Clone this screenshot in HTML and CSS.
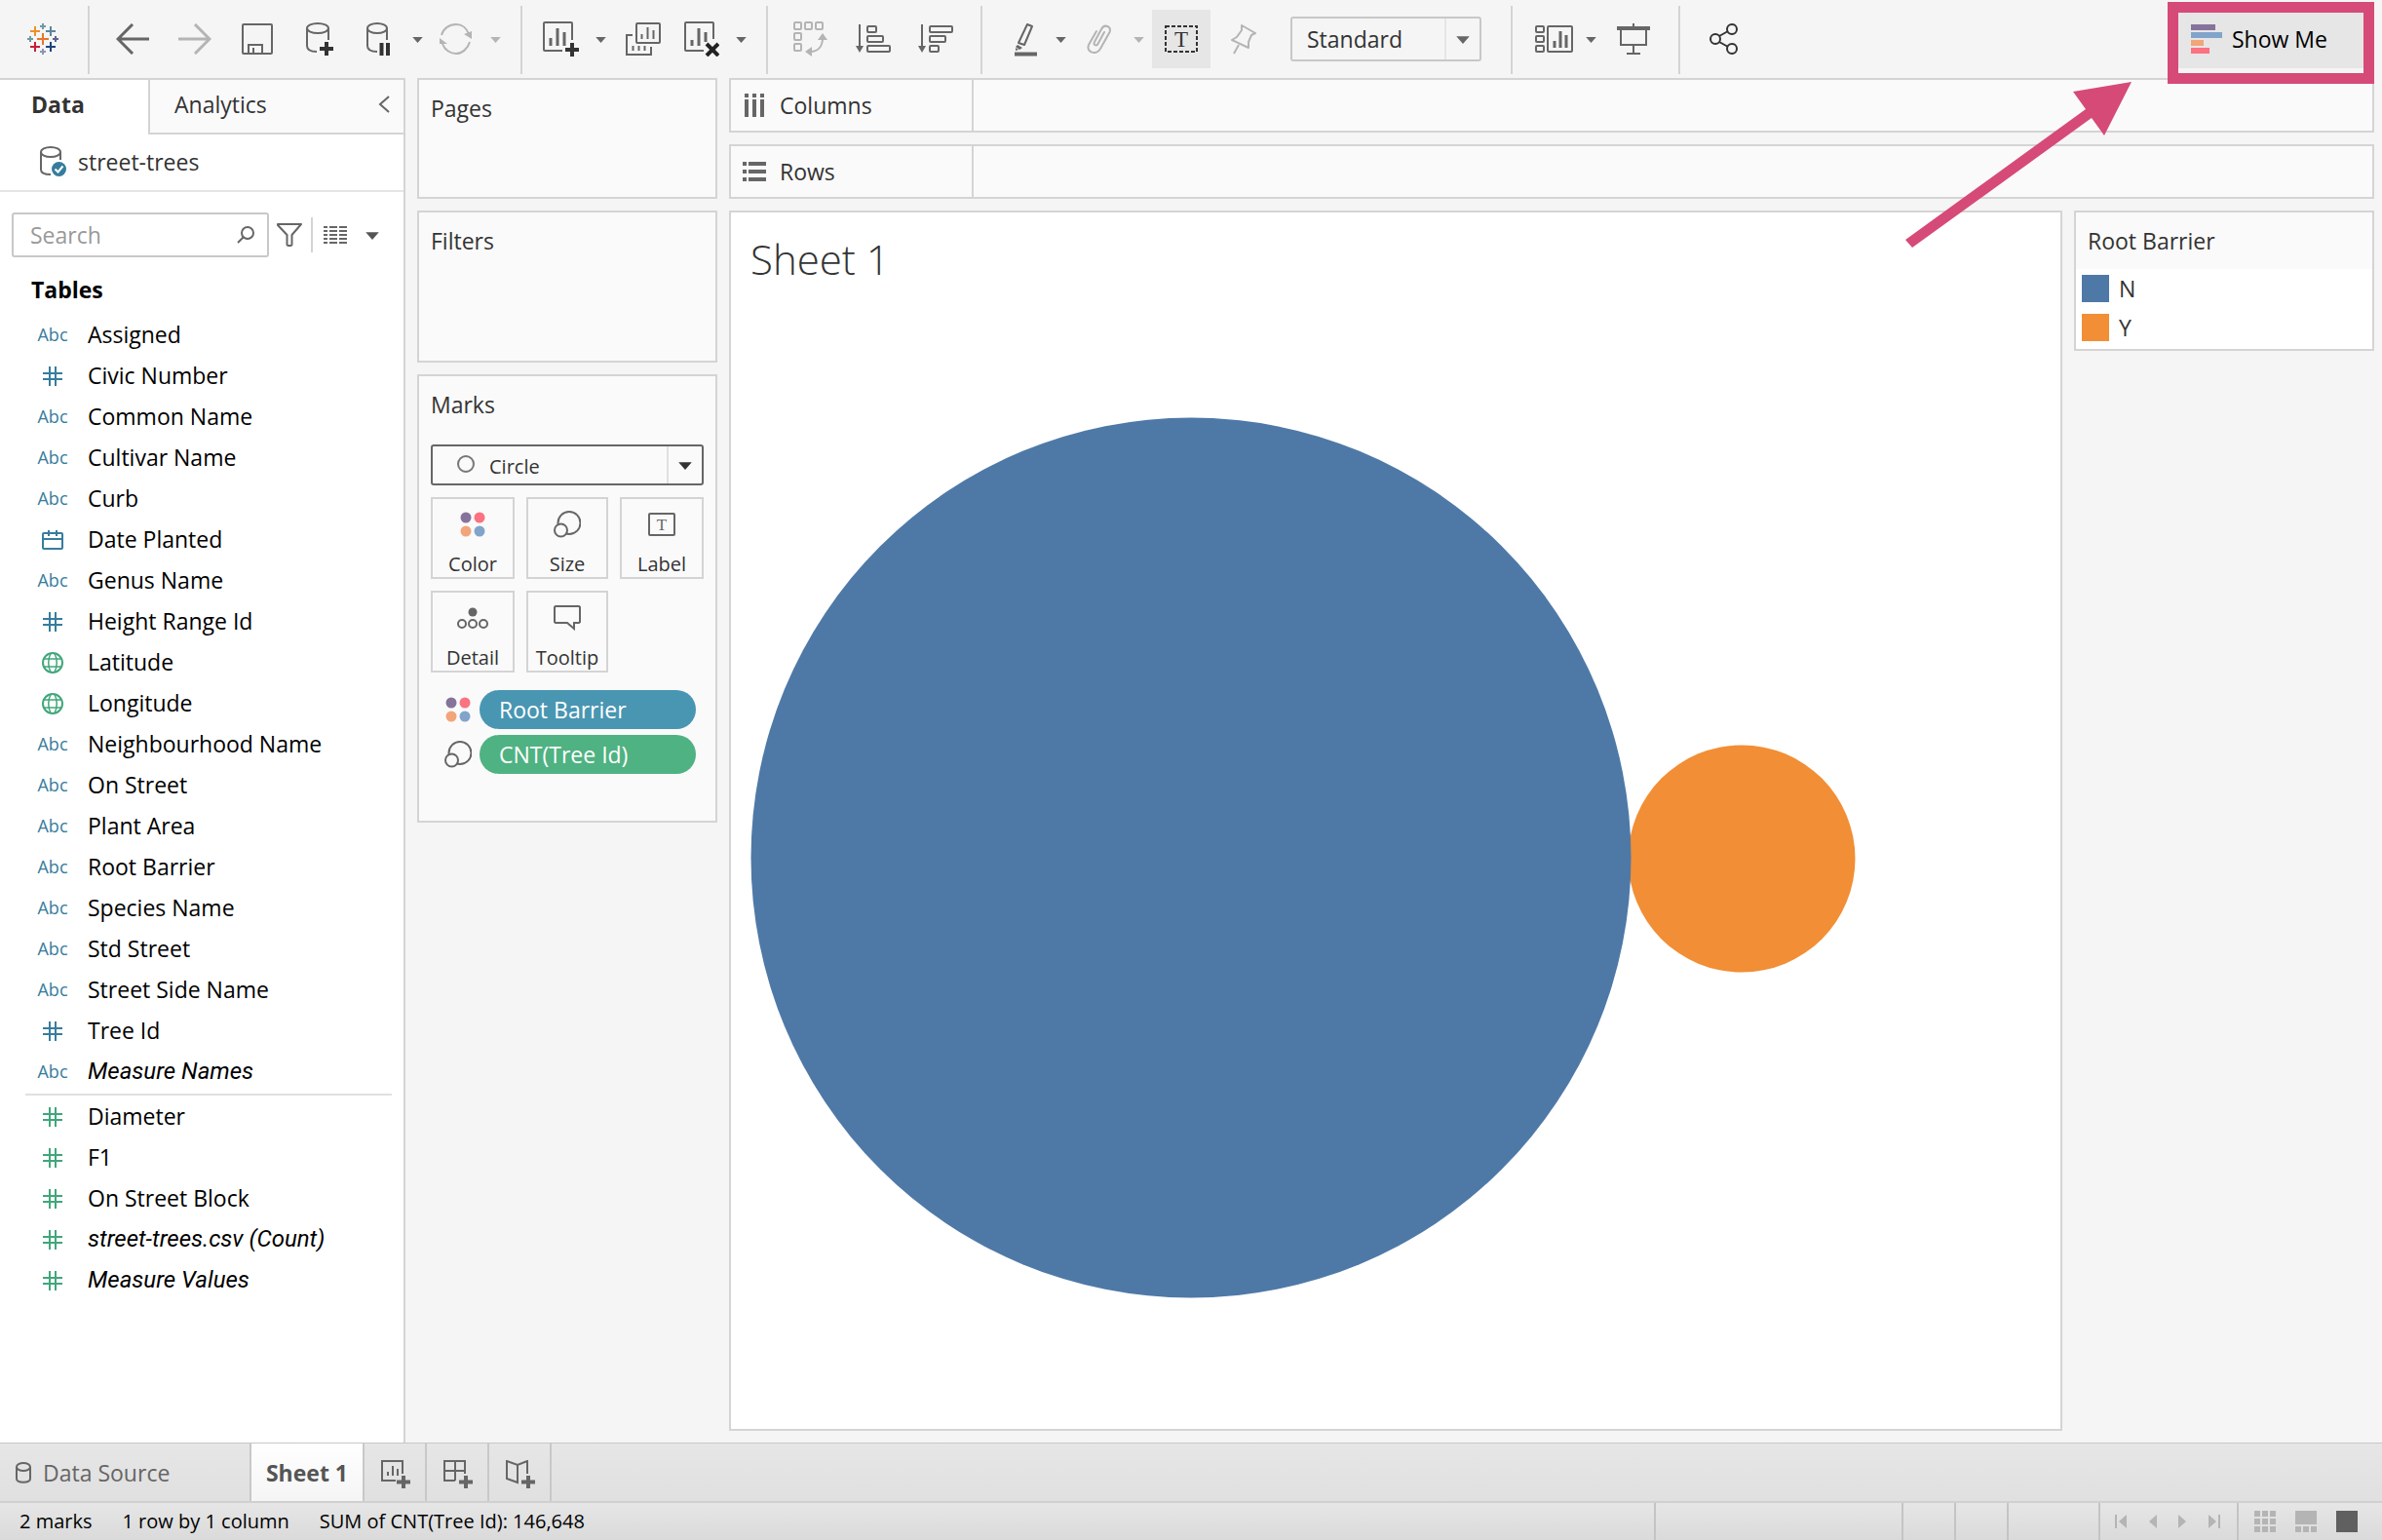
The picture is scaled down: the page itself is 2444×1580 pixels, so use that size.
FILE: index.html
```html
<!DOCTYPE html>
<html lang="en">
<head>
<meta charset="utf-8">
<title>Sheet 1 - street-trees</title>
<link rel="stylesheet" href="styles.css">
</head>
<body>
<svg class="sprite" aria-hidden="true">
  <symbol id="caret" viewBox="0 0 12 8"><path d="M0 1h12L6 8z" fill="currentColor"/></symbol>
  <symbol id="hash" viewBox="0 0 20 20"><path d="M7 0v20M13 0v20M0 7h20M0 13h20" fill="none" stroke="currentColor" stroke-width="2"/></symbol>
  <symbol id="globe" viewBox="0 0 22 22"><g fill="none" stroke="currentColor"><circle cx="11" cy="11" r="10" stroke-width="2"/><g stroke-width="1.5"><path d="M9 1.500C6 7 6 15 9 20.500M13 1.500c3 5.500 3 13.500 0 19M2 7h18M2 15h18"/></g></g></symbol>
  <symbol id="calendar" viewBox="0 0 22 20"><g fill="none" stroke="currentColor" stroke-width="2"><rect x="1" y="3" width="20" height="16" rx="1"/><path d="M1 9h20M7 0v6M15 0v6"/></g></symbol>
  <symbol id="dots" viewBox="0 0 26 26"><circle cx="6" cy="6" r="5.500" fill="#86739c"/><circle cx="20" cy="6" r="5.500" fill="#fb7280"/><circle cx="6" cy="20" r="5.500" fill="#f2a57b"/><circle cx="20" cy="20" r="5.500" fill="#82a4cb"/></symbol>
  <symbol id="size" viewBox="0 0 28 28"><g stroke="#666" stroke-width="2"><circle cx="16" cy="12.500" r="11.500" fill="none"/><circle cx="7.500" cy="20" r="6.500" fill="#fafafa"/></g></symbol>
</svg>

<header class="toolbar">
  <a class="logo" href="#" aria-label="Tableau home">
    <svg width="32" height="32" viewBox="0 0 32 32" fill="none">
      <path d="M16 10v12M10 16h12" stroke="#e8762c" stroke-width="2"/>
      <path d="M8 3v10M3 8h10" stroke="#eb912b" stroke-width="2"/>
      <path d="M24 3v10M19 8h10" stroke="#59879b" stroke-width="2"/>
      <path d="M8 19v10M3 24h10" stroke="#c72035" stroke-width="2"/>
      <path d="M24 19v10M19 24h10" stroke="#1f457e" stroke-width="2"/>
      <path d="M16 0v6M13 3h6M3 13v6M0 16h6" stroke="#7099a6" stroke-width="2"/>
      <path d="M29 13v6M26 16h6" stroke="#5b6591" stroke-width="2"/>
      <path d="M16 26v6M13 29h6" stroke="#8a94b8" stroke-width="2"/>
    </svg>
  </a>
  <span class="sep"></span>
  <button class="tool" aria-label="Undo"><svg width="34" height="32" viewBox="0 0 34 32"><path d="M17 1L2 16l15 15M2 16h32" fill="none" stroke="currentColor" stroke-width="3"/></svg></button>
  <button class="tool muted" aria-label="Redo"><svg width="34" height="32" viewBox="0 0 34 32"><path d="M17 1l15 15-15 15M32 16H0" fill="none" stroke="currentColor" stroke-width="3"/></svg></button>
  <button class="tool" aria-label="Save"><svg width="32" height="32" viewBox="0 0 32 32" fill="none" stroke="currentColor" stroke-width="2"><rect x="1" y="1" width="30" height="30" rx="1"/><path d="M7 31v-9h14v9M12 31v-6"/></svg></button>
  <button class="tool" aria-label="New data source"><svg width="28" height="34" viewBox="0 0 28 34" fill="none" stroke="currentColor" stroke-width="2"><ellipse cx="12" cy="6" rx="11" ry="5"/><path d="M1 6v18c0 4 4 6 10 6M23 6v12"/><path d="M21 20v14M14 27h14" stroke="#333" stroke-width="4"/></svg></button>
  <button class="tool split" aria-label="Pause auto updates"><svg width="24" height="34" viewBox="0 0 24 34" fill="none" stroke="currentColor" stroke-width="2"><ellipse cx="11" cy="6" rx="10" ry="5"/><path d="M1 6v18c0 4 4 6 10 6M21 6v12"/><path d="M15.500 21v13M22 21v13" stroke="#333" stroke-width="4"/></svg></button>
  <button class="drop" aria-label="Auto update options"><svg width="11" height="7"><use href="#caret"/></svg></button>
  <button class="tool split muted" aria-label="Refresh"><svg width="34" height="32" viewBox="0 0 34 32" fill="none" stroke="currentColor" stroke-width="2"><path d="M2 12C4 5 10 1 17 1c6 0 11 4 13 10M31 19c-2 7-8 12-14 12S5 27 3 21"/><path d="M25 11l8-3v8zM0 15l8 6H0z" fill="currentColor" stroke="none"/></svg></button>
  <button class="drop muted" aria-label="Refresh options"><svg width="11" height="7"><use href="#caret"/></svg></button>
  <span class="sep"></span>
  <button class="tool split" aria-label="New worksheet"><svg width="38" height="36" viewBox="0 0 38 36" fill="none" stroke="currentColor" stroke-width="2"><path d="M20 30H2a1 1 0 0 1-1-1V2a1 1 0 0 1 1-1h27a1 1 0 0 1 1 1v17"/><path d="M8 25v-8M15 25V7M22 25V11" stroke-width="3"/><path d="M30 22v14M23 29h14" stroke="#333" stroke-width="4"/></svg></button>
  <button class="drop" aria-label="New worksheet options"><svg width="11" height="7"><use href="#caret"/></svg></button>
  <button class="tool" aria-label="Duplicate"><svg width="36" height="34" viewBox="0 0 36 34" fill="none" stroke="currentColor" stroke-width="2"><rect x="11" y="1" width="24" height="20" rx="1"/><path d="M16.500 17v-5M22.500 17V5M28.500 17V8M7 13H1v20h25v-8M7.500 29v-5M13.500 29v-5M19.500 29v-5"/></svg></button>
  <button class="tool split" aria-label="Clear sheet"><svg width="36" height="36" viewBox="0 0 36 36" fill="none" stroke="currentColor" stroke-width="2"><path d="M20 30H2a1 1 0 0 1-1-1V2a1 1 0 0 1 1-1h27a1 1 0 0 1 1 1v16"/><path d="M8 25v-6M15 25V7M22 21V11" stroke-width="3"/><path d="M23 23l12 12M35 23L23 35" stroke="#222" stroke-width="4"/></svg></button>
  <button class="drop" aria-label="Clear options"><svg width="11" height="7"><use href="#caret"/></svg></button>
  <span class="sep"></span>
  <button class="tool muted" aria-label="Swap rows and columns"><svg width="36" height="36" viewBox="0 0 36 36" fill="none" stroke="currentColor" stroke-width="2"><rect x="1" y="1" width="7" height="7" rx="1"/><rect x="12" y="1" width="7" height="7" rx="1"/><rect x="23" y="1" width="7" height="7" rx="1"/><rect x="1" y="12" width="7" height="7" rx="1"/><rect x="1" y="23" width="7" height="7" rx="1"/><path d="M17 31c8 0 13-5 13-14"/><path d="M30 12l5 7H25zM12 31l7-5v10z" fill="currentColor" stroke="none"/></svg></button>
  <button class="tool" aria-label="Sort ascending"><svg width="36" height="30" viewBox="0 0 36 30" fill="none" stroke="currentColor" stroke-width="2"><path d="M4 0v25"/><path d="M0 22h8l-4 7z" fill="currentColor" stroke="none"/><rect x="12" y="2" width="9" height="6" rx="1"/><rect x="12" y="12" width="16" height="6" rx="1"/><rect x="12" y="22" width="23" height="6" rx="1"/></svg></button>
  <button class="tool" aria-label="Sort descending"><svg width="36" height="30" viewBox="0 0 36 30" fill="none" stroke="currentColor" stroke-width="2"><path d="M4 0v25"/><path d="M0 22h8l-4 7z" fill="currentColor" stroke="none"/><rect x="12" y="2" width="23" height="6" rx="1"/><rect x="12" y="12" width="16" height="6" rx="1"/><rect x="12" y="22" width="9" height="6" rx="1"/></svg></button>
  <span class="sep"></span>
  <button class="tool split" aria-label="Highlight"><svg width="32" height="36" viewBox="0 0 32 36" fill="none" stroke="currentColor" stroke-width="2"><path d="M22 3l5 2-8 19-6-2z" stroke-linejoin="round"/><path d="M12 24l5 3-3 2-4-3zM10 27v3l3-1z" fill="currentColor" stroke="none"/><path d="M9 33.500h23" stroke-width="4"/></svg></button>
  <button class="drop" aria-label="Highlight options"><svg width="11" height="7"><use href="#caret"/></svg></button>
  <button class="tool split muted" aria-label="Group members"><svg width="26" height="32" viewBox="0 0 26 32" fill="none" stroke="currentColor" stroke-width="2" stroke-linecap="round"><path d="M18 9l-6.500 12c-1.500 3-5 1-3.500-2L15 6c3-6 11-3 8.500 3L14 26c-4 7-15 4-12-4l8-14"/></svg></button>
  <button class="drop muted" aria-label="Group options"><svg width="11" height="7"><use href="#caret"/></svg></button>
  <button class="tool on" aria-label="Show mark labels" aria-pressed="true"><svg width="34" height="28" viewBox="0 0 34 28"><rect x="1" y="1" width="32" height="26" fill="none" stroke="#333" stroke-width="2" stroke-dasharray="4 2"/><text x="17" y="22" class="serif-t" font-size="23" text-anchor="middle">T</text></svg></button>
  <button class="tool muted" aria-label="Pin"><svg width="28" height="32" viewBox="0 0 28 32" fill="none" stroke="currentColor" stroke-width="2" stroke-linejoin="round"><path d="M12 2l14 8-4 2-3 7v6L2 17l5-3 5-7zM9 22L4 31"/></svg></button>
  <div class="fit">
    <select aria-label="Fit"><option>Standard</option></select>
    <svg width="14" height="9"><use href="#caret"/></svg>
  </div>
  <span class="sep wide"></span>
  <button class="tool split" aria-label="Show or hide cards"><svg width="44" height="28" viewBox="-5 0 44 28" fill="none" stroke="currentColor" stroke-width="2"><rect x="1" y="1" width="8" height="6" rx="1"/><rect x="1" y="11" width="8" height="6" rx="1"/><rect x="1" y="21" width="8" height="6" rx="1"/><rect x="13" y="1" width="25" height="26" rx="1"/><path d="M20 23v-7M26 23V6M32 23V10" stroke-width="3"/></svg></button>
  <button class="drop" aria-label="Card options"><svg width="11" height="7"><use href="#caret"/></svg></button>
  <button class="tool" aria-label="Presentation mode"><svg width="34" height="32" viewBox="0 0 34 32" fill="none" stroke="currentColor" stroke-width="2"><path d="M0 5h34" stroke-width="4"/><path d="M17 0v4M4 7v15h26V7M17 22v9M10 31h14"/></svg></button>
  <span class="sep"></span>
  <button class="tool dark" aria-label="Share"><svg width="30" height="32" viewBox="0 0 30 32" fill="none" stroke="currentColor" stroke-width="2"><circle cx="7" cy="16" r="5"/><circle cx="24" cy="6" r="5"/><circle cx="24" cy="26" r="5"/><path d="M11 13l9-5M11 19l9 5"/></svg></button>
  <button class="show-me"><svg width="32" height="30" viewBox="0 0 32 30"><path d="M0 0h25v6H0z" fill="#86739c"/><path d="M0 8h32v6H0z" fill="#82a4cb"/><path d="M0 16h13v6H0z" fill="#f2a57b"/><path d="M0 24h19v6H0z" fill="#fb7280"/></svg>Show Me</button>
  <svg class="pointer" width="232" height="170" viewBox="0 0 232 170" aria-hidden="true"><path d="M232 0l-60 10 13 18L0 162l7 8L191 37l13 18z" fill="#d64a78"/></svg>
</header>

<div class="workspace">
  <aside class="data-pane">
    <div class="tabs">
      <button class="tab active">Data</button>
      <button class="tab">Analytics<svg width="12" height="18" viewBox="0 0 12 18"><path d="M11 1L2 9l9 8" fill="none" stroke="#666" stroke-width="2"/></svg></button>
    </div>
    <a class="source" href="#">
      <svg width="28" height="32" viewBox="0 0 28 32"><g fill="none" stroke="#666" stroke-width="2"><ellipse cx="12" cy="6" rx="10" ry="5"/><path d="M2 6v18c0 4 4 5 10 5M22 6v8"/></g><circle cx="20.500" cy="23.500" r="7.500" fill="#367d9d"/><path d="M16.500 23.500l3 3 5-6" fill="none" stroke="#fff" stroke-width="2"/></svg>
      street-trees
    </a>
    <div class="search-row">
      <label class="search"><input type="text" placeholder="Search" aria-label="Search">
        <svg width="18" height="18" viewBox="0 0 18 18" fill="none" stroke="#666" stroke-width="2"><circle cx="11" cy="7" r="6"/><path d="M7 11l-6 6"/></svg></label>
      <button class="mini" aria-label="Filter"><svg width="26" height="24" viewBox="0 0 26 24"><path d="M1 1h24l-9.500 11v10l-1 1h-3l-1-1V12L1 2z" fill="none" stroke="#666" stroke-width="2" stroke-linejoin="round"/></svg></button>
      <span class="mini-sep"></span>
      <button class="mini listing" aria-label="View"><svg width="24" height="18" viewBox="0 0 24 18"><path d="M0 1h24M0 5h24M0 9h24M0 13h24M0 17h24" stroke="#666" stroke-width="2"/><path d="M5 0v18M15 0v18" stroke="#fff" stroke-width="2"/></svg></button>
      <button class="mini menu" aria-label="View options"><svg width="14" height="9"><use href="#caret"/></svg></button>
    </div>
    <h2>Tables</h2>
    <ul class="fields">
      <li><span class="type">Abc</span>Assigned</li>
      <li><span class="type"><svg width="20" height="20"><use href="#hash"/></svg></span>Civic Number</li>
      <li><span class="type">Abc</span>Common Name</li>
      <li><span class="type">Abc</span>Cultivar Name</li>
      <li><span class="type">Abc</span>Curb</li>
      <li><span class="type"><svg width="22" height="20"><use href="#calendar"/></svg></span>Date Planted</li>
      <li><span class="type">Abc</span>Genus Name</li>
      <li><span class="type"><svg width="20" height="20"><use href="#hash"/></svg></span>Height Range Id</li>
      <li><span class="type measure"><svg width="22" height="22"><use href="#globe"/></svg></span>Latitude</li>
      <li><span class="type measure"><svg width="22" height="22"><use href="#globe"/></svg></span>Longitude</li>
      <li><span class="type">Abc</span>Neighbourhood Name</li>
      <li><span class="type">Abc</span>On Street</li>
      <li><span class="type">Abc</span>Plant Area</li>
      <li><span class="type">Abc</span>Root Barrier</li>
      <li><span class="type">Abc</span>Species Name</li>
      <li><span class="type">Abc</span>Std Street</li>
      <li><span class="type">Abc</span>Street Side Name</li>
      <li><span class="type"><svg width="20" height="20"><use href="#hash"/></svg></span>Tree Id</li>
      <li><span class="type">Abc</span><em>Measure Names</em></li>
    </ul>
    <ul class="fields measures">
      <li><span class="type measure"><svg width="20" height="20"><use href="#hash"/></svg></span>Diameter</li>
      <li><span class="type measure"><svg width="20" height="20"><use href="#hash"/></svg></span>F1</li>
      <li><span class="type measure"><svg width="20" height="20"><use href="#hash"/></svg></span>On Street Block</li>
      <li><span class="type measure"><svg width="20" height="20"><use href="#hash"/></svg></span><em>street-trees.csv (Count)</em></li>
      <li><span class="type measure"><svg width="20" height="20"><use href="#hash"/></svg></span><em>Measure Values</em></li>
    </ul>
  </aside>

  <div class="cards">
    <section class="card pages"><h3>Pages</h3></section>
    <section class="card filters"><h3>Filters</h3></section>
    <section class="card marks">
      <h3>Marks</h3>
      <div class="mark-type">
        <select aria-label="Mark type"><option>Circle</option></select>
        <svg class="shape" width="20" height="20" viewBox="0 0 20 20"><circle cx="10" cy="10" r="8" fill="none" stroke="#777" stroke-width="2"/></svg>
        <svg class="arrow" width="14" height="9"><use href="#caret"/></svg>
      </div>
      <div class="mark-buttons">
        <button><svg width="26" height="26"><use href="#dots"/></svg>Color</button>
        <button><svg width="28" height="28"><use href="#size"/></svg>Size</button>
        <button><svg width="28" height="24" viewBox="0 0 28 24"><rect x="1" y="1" width="26" height="22" rx="1" fill="none" stroke="#666" stroke-width="2"/><text x="14" y="18" class="serif-t soft" font-size="17" text-anchor="middle">T</text></svg>Label</button>
        <button><svg width="32" height="22" viewBox="0 0 32 22" fill="none" stroke="#666" stroke-width="2"><circle cx="16" cy="5" r="4.500" fill="#666" stroke="none"/><circle cx="5" cy="17" r="4"/><circle cx="16" cy="17" r="4"/><circle cx="27" cy="17" r="4"/></svg>Detail</button>
        <button><svg width="28" height="26" viewBox="0 0 28 26"><path d="M2 1h24l1 1v15l-1 1h-5v6l-7-6H2l-1-1V2z" fill="none" stroke="#666" stroke-width="2"/></svg>Tooltip</button>
      </div>
      <div class="pill-row"><svg width="26" height="26"><use href="#dots"/></svg><button class="pill dimension">Root Barrier</button></div>
      <div class="pill-row"><svg width="28" height="28"><use href="#size"/></svg><button class="pill measure-pill">CNT(Tree Id)</button></div>
    </section>
  </div>

  <main>
    <div class="shelf"><div class="shelf-name"><svg width="24" height="24" viewBox="0 0 24 24"><path d="M4 0v4M12 0v4M20 0v4M4 6v18M12 6v18M20 6v18" stroke="#666" stroke-width="4"/></svg>Columns</div></div>
    <div class="shelf"><div class="shelf-name"><svg width="24" height="20" viewBox="0 0 24 20"><path d="M0 2h4M0 10h4M0 18h4M6 2h18M6 10h18M6 18h18" stroke="#666" stroke-width="4"/></svg>Rows</div></div>
    <div class="view">
      <section class="sheet">
        <h1>Sheet 1</h1>
        <svg class="viz" viewBox="0 0 1364 1140" preserveAspectRatio="xMinYMin meet" role="img" aria-label="Tree count by root barrier"><circle cx="1037" cy="555" r="116.500" fill="#f28e35"/><circle cx="472" cy="554" r="451.500" fill="#4e79a7"/></svg>
      </section>
      <aside class="legend">
        <h3>Root Barrier</h3>
        <ul><li><span class="swatch no"></span>N</li><li><span class="swatch yes"></span>Y</li></ul>
      </aside>
    </div>
  </main>
</div>

<nav class="sheets">
  <button class="data-source"><svg width="16" height="22" viewBox="0 0 16 22" fill="none" stroke="currentColor" stroke-width="2"><ellipse cx="8" cy="5" rx="7" ry="4"/><path d="M1 5v12c0 5 14 5 14 0V5"/></svg>Data Source</button>
  <button class="current">Sheet 1</button>
  <button class="new" aria-label="New worksheet"><svg width="30" height="30" viewBox="0 0 30 30" fill="none" stroke="currentColor" stroke-width="2"><path d="M15 21H1V1h21v13M7 16v-4M12 16V6M17 16V9"/><path d="M23 16v13M16 22.500h14" stroke-width="4"/></svg></button>
  <button class="new" aria-label="New dashboard"><svg width="30" height="30" viewBox="0 0 30 30" fill="none" stroke="currentColor" stroke-width="2"><path d="M12 21H1V1h21v13M12 1v20M1 11h21"/><path d="M23 16v13M16 22.500h14" stroke-width="4"/></svg></button>
  <button class="new" aria-label="New story"><svg width="30" height="30" viewBox="0 0 30 30" fill="none" stroke="currentColor" stroke-width="2"><path d="M12 4v19L1 19V1l11 4 10-4v13"/><path d="M23 16v13M16 22.500h14" stroke-width="4"/></svg></button>
</nav>

<footer class="status">
  <span>2 marks</span><span>1 row by 1 column</span><span class="sum">SUM of CNT(Tree Id): 146,648</span>
  <i class="cell long"></i><i class="cell"></i><i class="cell"></i><i class="cell mid"></i>
  <div class="cell pager">
    <button aria-label="First"><svg width="12" height="14" viewBox="0 0 12 14"><path d="M0 0h2v14H0zM12 0v14L4 7z"/></svg></button>
    <button aria-label="Previous"><svg width="8" height="14" viewBox="0 0 8 14"><path d="M8 0v14L0 7z"/></svg></button>
    <button aria-label="Next"><svg width="8" height="14" viewBox="0 0 8 14"><path d="M0 0v14l8-7z"/></svg></button>
    <button aria-label="Last"><svg width="12" height="14" viewBox="0 0 12 14"><path d="M10 0h2v14h-2zM0 0v14l8-7z"/></svg></button>
  </div>
  <div class="cell views">
    <button aria-label="Sheet sorter"><svg width="22" height="22" viewBox="0 0 22 22"><path d="M0 0h6v6H0zM8 0h6v6H8zM16 0h6v6h-6zM0 8h6v6H0zM8 8h6v6H8zM16 8h6v6h-6zM0 16h6v6H0zM8 16h6v6H8zM16 16h6v6h-6z"/></svg></button>
    <button aria-label="Filmstrip"><svg width="22" height="22" viewBox="0 0 22 22"><path d="M0 0h22v14H0zM0 16h6v6H0zM8 16h6v6H8zM16 16h6v6h-6z"/></svg></button>
    <button class="chosen" aria-label="Tabs"><svg width="22" height="22" viewBox="0 0 22 22"><path d="M0 0h22v22H0z"/></svg></button>
  </div>
</footer>
</body>
</html>
```

FILE: styles.css
```css
* { box-sizing: border-box; }

body {
  margin: 0;
  min-height: 100vh;
  display: flex;
  flex-direction: column;
  background: #f5f5f5;
  color: #333;
  font: 23px/42px "Open Sans", "Noto Sans", sans-serif;
}

h1, h2, h3, ul { margin: 0; padding: 0; font-weight: 400; font-size: inherit; list-style: none; }
button, select, input { margin: 0; padding: 0; border: 0; background: none; color: inherit; font: inherit; }
a { color: inherit; text-decoration: none; }
svg { display: block; flex: none; }
.sprite { position: absolute; width: 0; height: 0; }
.serif-t { font-family: "Liberation Serif", serif; fill: #333; }
.soft { fill: #666; }

/* Toolbar */
.toolbar { position: relative; display: flex; align-items: center; height: 80px; color: #666; }
.logo { padding: 0 16px 0 28px; }
.sep { flex: none; width: 2px; height: 70px; margin: 2px 12px 0 14px; background: #d4d4d4; }
.sep.wide { margin-left: 30px; }
.tool, .drop { flex: none; display: flex; align-items: center; justify-content: center; width: 64px; height: 60px; }
.split { width: 56px; }
.drop { width: 24px; }
.muted { color: #b4b4b4; }
.dark { color: #333; }
.on { width: 60px; margin: 0 2px; background: #e6e6e6; }
.fit { position: relative; width: 196px; height: 46px; margin-left: 16px; border: 2px solid #c8c8c8; border-radius: 3px; }
.fit select { width: 100%; height: 42px; padding-left: 15px; appearance: none; color: #333; }
.fit svg { position: absolute; top: 17px; right: 10px; }
.fit::after { content: ""; position: absolute; top: 0; right: 34px; width: 2px; height: 42px; background: #e6e6e6; }
.show-me { position: relative; display: flex; align-items: center; gap: 10px; width: 204px; height: 60px; margin: 0 8px 0 auto; padding-left: 16px; background: #e6e6e6; color: #000; }
.show-me::after { content: ""; position: absolute; inset: -8px 0 -16px -8px; border: 11px solid #d64a78; }
.pointer { position: absolute; z-index: 1; top: 84px; right: 257px; }

/* Workspace */
.workspace { flex: 1; display: flex; gap: 12px; padding-right: 8px; }

.data-pane { flex: none; width: 416px; background: #fff; border: solid #d4d4d4; border-width: 2px 2px 0 0; }
.tabs { display: flex; }
.tab { display: flex; align-items: center; justify-content: space-between; height: 56px; padding-bottom: 6px; }
.tab.active { width: 152px; padding-left: 32px; font-weight: 700; }
.tab:not(.active) { flex: 1; padding: 0 14px 4px 25px; background: #fafafa; border: solid #d4d4d4; border-width: 0 0 2px 2px; }
.source { display: flex; align-items: center; gap: 12px; height: 59px; padding: 0 0 2px 40px; border-bottom: 2px solid #e5e5e5; }
.search-row { display: flex; align-items: center; padding: 21px 14px 0 12px; }
.search { position: relative; width: 264px; height: 46px; }
.search input { display: block; width: 100%; height: 46px; padding: 0 40px 0 17px; border: 2px solid #c8c8c8; border-radius: 3px; outline: 0; }
.search input::placeholder { color: #999; opacity: 1; }
.search svg { position: absolute; top: 14px; right: 15px; }
.mini { margin-left: 8px; }
.mini.listing { margin-left: 11px; }
.mini.menu { margin-left: 19px; color: #555; }
.mini-sep { width: 2px; height: 36px; margin-left: 9px; background: #d4d4d4; }
.data-pane h2 { padding: 12px 0 4px 32px; color: #000; font-weight: 700; }
.fields { color: #000; }
.fields li { display: flex; align-items: center; height: 42px; padding-left: 32px; }
.fields em { font-family: Roboto, sans-serif; font-size: 24px; }
.type { width: 44px; margin-right: 14px; display: flex; justify-content: center; color: #367d9d; font-size: 18px; }
.type.measure { color: #41a67a; }
.type svg { margin-top: 2px; }
.measures::before { content: ""; display: block; height: 2px; margin: 2px 12px 0 26px; background: #e0e0e0; }

/* Cards */
.cards { flex: none; width: 308px; display: flex; flex-direction: column; gap: 12px; }
.card { background: #fafafa; border: 2px solid #d4d4d4; }
.card h3 { padding: 8px 0 0 12px; }
.pages { height: 124px; }
.filters { height: 156px; }
.marks { height: 460px; font-size: 20px; }
.marks h3 { font-size: 23px; }
.mark-type { position: relative; margin: 20px 12px 12px; height: 42px; border: 2px solid #666; border-radius: 3px; }
.mark-type select { width: 100%; height: 38px; padding: 0 0 2px 58px; appearance: none; }
.mark-type svg { position: absolute; }
.mark-type .shape { top: 8px; left: 24px; }
.mark-type .arrow { top: 15px; right: 10px; }
.mark-type::after { content: ""; position: absolute; top: 0; right: 34px; width: 2px; height: 38px; background: #e0e0e0; }
.mark-buttons { display: grid; grid-template-columns: 86px 84px 86px; gap: 12px; margin: 0 12px 18px; }
.mark-buttons button { display: grid; grid-template-rows: 52px 30px; align-items: center; justify-items: center; height: 84px; padding-bottom: 2px; border: 2px solid #d4d4d4; line-height: 30px; }
.pill-row { display: grid; grid-template-columns: 28px 222px; gap: 8px; align-items: center; justify-items: center; margin: 0 0 6px 26px; }
.pill { width: 222px; height: 40px; padding-left: 20px; border-radius: 20px; color: #fff; font-size: 23px; line-height: 38px; text-align: left; }
.dimension { background: #4996b2; }
.measure-pill { background: #4fb282; }

/* Shelves and view */
main { flex: 1; min-width: 0; display: flex; flex-direction: column; gap: 12px; }
.shelf { height: 56px; background: #fafafa; border: 2px solid #d4d4d4; }
.shelf-name { display: flex; align-items: center; gap: 14px; width: 249px; height: 52px; padding: 0 0 0 12px; border-right: 2px solid #d4d4d4; }
.view { flex: 1; display: flex; align-items: flex-start; gap: 12px; padding-bottom: 12px; }
.sheet { flex: 1; min-width: 0; align-self: stretch; display: flex; flex-direction: column; background: #fff; border: 2px solid #d4d4d4; }
.sheet h1 { padding: 18px 0 30px 20px; font-size: 42px; font-weight: 300; line-height: 60px; }
.viz { width: 100%; flex: 1 1 0; min-height: 0; }
.legend { flex: none; width: 308px; height: 144px; background: #fff; border: 2px solid #d4d4d4; }
.legend h3 { height: 58px; padding: 8px 0 0 12px; background: #fafafa; }
.legend li { display: flex; align-items: center; gap: 10px; height: 40px; padding-left: 6px; }
.swatch { width: 28px; height: 28px; }
.no { background: #4e79a7; }
.yes { background: #f28e35; }

/* Sheet tabs */
.sheets { display: flex; height: 60px; border-top: 1px solid #c8c8c8; background: linear-gradient(#e6e6e6, #e0e0e0); color: #666; }
.sheets button { display: flex; align-items: center; justify-content: center; border-right: 2px solid #c8c8c8; }
.sheets .data-source { width: 258px; justify-content: flex-start; gap: 12px; padding-left: 16px; }
.sheets .current { width: 116px; background: linear-gradient(#fff, #f5f5f5); color: #555; font-weight: 700; }
.sheets .new { width: 64px; padding: 4px 0 0 2px; }

/* Status bar */
.status { display: flex; align-items: center; height: 40px; padding-left: 20px; border-top: 2px solid #d0d0d0; background: linear-gradient(#e6e6e6, #dadada); color: #000; font-size: 20px; line-height: 38px; }
.status span { margin-right: 31px; }
.status .sum { margin-right: auto; }
.cell { flex: none; width: 54px; height: 38px; border-left: 2px solid #c4c4c4; fill: #b4b4b4; }
.cell.long { width: 254px; }
.cell.mid { width: 94px; }
.pager { display: flex; align-items: center; justify-content: space-between; width: 142px; padding: 0 17px 0 15px; }
.views { display: flex; align-items: center; gap: 20px; width: 149px; padding-left: 16px; }
.cell .chosen { fill: #606060; }
```
